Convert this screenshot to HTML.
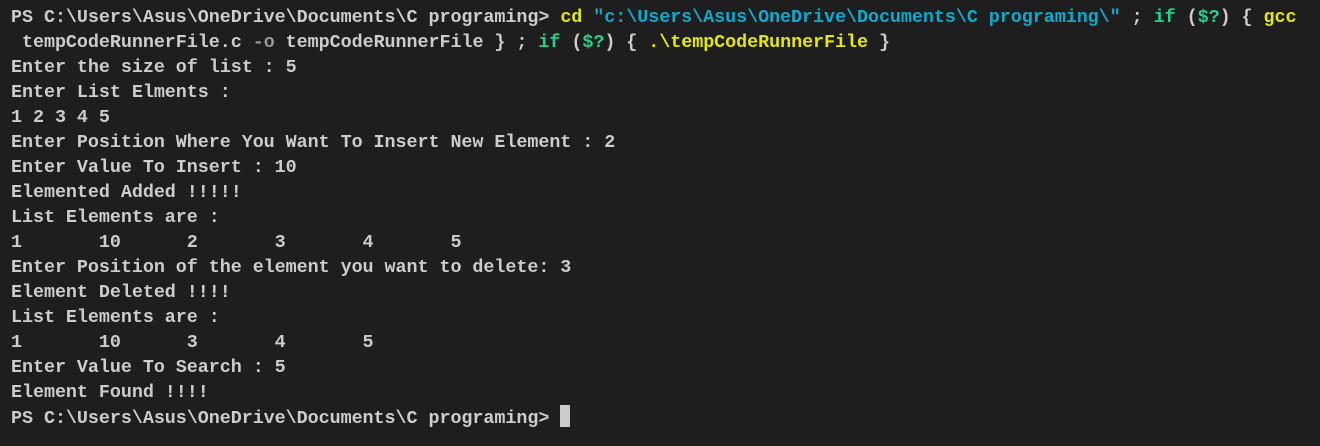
<!DOCTYPE html><html><head><style>
body{margin:0;background:#1e1e1e;width:1320px;height:446px;overflow:hidden}
pre{margin:0;padding:5px 0 0 11px;font-family:"Liberation Mono",monospace;font-size:18.4px;line-height:25px;color:#cccccc;white-space:pre;font-weight:bold;letter-spacing:-0.05px}
.y{color:#e5e510}.c{color:#11a8cd}.g{color:#23d18b}.d{color:#999}
.cur{display:inline-block;width:10px;height:22px;background:#cccccc;vertical-align:-4px}
</style></head><body><pre>PS C:\Users\Asus\OneDrive\Documents\C programing&gt; <span class="y">cd</span> <span class="c">"c:\Users\Asus\OneDrive\Documents\C programing\"</span> ; <span class="g">if</span> (<span class="g">$?</span>) { <span class="y">gcc</span>
 tempCodeRunnerFile.c <span class="d">-o</span> tempCodeRunnerFile } ; <span class="g">if</span> (<span class="g">$?</span>) { <span class="y">.\tempCodeRunnerFile</span> }
Enter the size of list : 5
Enter List Elments :
1 2 3 4 5
Enter Position Where You Want To Insert New Element : 2
Enter Value To Insert : 10
Elemented Added !!!!!
List Elements are :
1       10      2       3       4       5
Enter Position of the element you want to delete: 3
Element Deleted !!!!
List Elements are :
1       10      3       4       5
Enter Value To Search : 5
Element Found !!!!
PS C:\Users\Asus\OneDrive\Documents\C programing&gt; <span class="cur"></span></pre></body></html>
